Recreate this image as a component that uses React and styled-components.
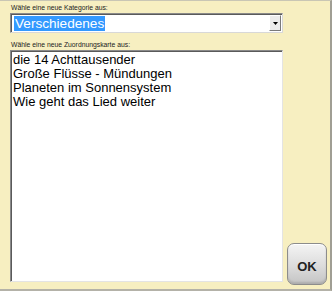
import styled, { createGlobalStyle } from 'styled-components'

const GlobalStyle = createGlobalStyle`
  html, body {
    margin: 0;
    padding: 0;
    background: #f7efc1;
  }
  * {
    box-sizing: border-box;
  }
`

const items = [
  'die 14 Achttausender',
  'Große Flüsse - Mündungen',
  'Planeten im Sonnensystem',
  'Wie geht das Lied weiter'
]

const App = () => {
  return (
    <>
      <GlobalStyle />
      <Dialog>
        <Column>
          <Label>Wähle eine neue Kategorie aus:</Label>
          <Select>
            <Selected>Verschiedenes</Selected>
            <DropButton>
              <svg width='5' height='3' viewBox='0 0 5 3'>
                <path d='M0 0h5L2.5 3z' fill='#000' />
              </svg>
            </DropButton>
          </Select>
          <Label $gap>Wähle eine neue Zuordnungskarte aus:</Label>
          <ListBox>
            {items.map((item) => (
              <Item key={item}>{item}</Item>
            ))}
          </ListBox>
        </Column>
        <Side>
          <OkButton>OK</OkButton>
        </Side>
      </Dialog>
    </>
  )
}

const Dialog = styled.div`
  width: 332px;
  height: 291px;
  display: grid;
  grid-template-columns: 283px 1fr;
  background: #f7efc1;
  border-top: 1px solid #c9c6b4;
  border-right: 2px solid #a09e94;
  border-bottom: 2px solid #b4b2a8;
  font-family: 'Liberation Sans', Arial, sans-serif;
`

const Column = styled.div`
  display: flex;
  flex-direction: column;
  padding: 2px 0 0 10px;
`

const Label = styled.div`
  font-size: 6.8px;
  line-height: 9px;
  height: 10px;
  color: #222;
  padding-left: 1px;
  margin-top: ${(p) => (p.$gap ? '7px' : '0')};
`

const Select = styled.div`
  height: 20px;
  display: flex;
  align-items: center;
  justify-content: space-between;
  background: #fff;
  border-top: 1px solid #8a8a8a;
  border-left: 1px solid #8a8a8a;
  border-right: 1px solid #d8d8d8;
  border-bottom: 1px solid #d8d8d8;
  box-shadow: inset 1px 1px 0 #5a5a5a;
  padding: 1px 1px 1px 3px;
`

const Selected = styled.span`
  background: #3399ff;
  color: #fff;
  font-size: 13.6px;
  line-height: 15px;
  padding: 0 1px;
`

const DropButton = styled.div`
  width: 12px;
  height: 16px;
  display: flex;
  align-items: center;
  justify-content: center;
  background: #ececec;
  border-top: 1px solid #fff;
  border-left: 1px solid #fff;
  border-right: 1px solid #7a7a7a;
  border-bottom: 1px solid #7a7a7a;
`

const ListBox = styled.div`
  height: 232px;
  background: #fff;
  border-top: 1px solid #8a8a8a;
  border-left: 1px solid #8a8a8a;
  border-right: 1px solid #e4e4e4;
  border-bottom: 1px solid #e4e4e4;
  box-shadow: inset 1px 1px 0 #5a5a5a;
  padding: 2px 2px 0 2px;
`

const Item = styled.div`
  font-size: 13px;
  line-height: 14px;
  color: #000;
`

const Side = styled.div`
  display: flex;
  align-items: flex-end;
  padding: 0 0 4px 4px;
`

const OkButton = styled.button`
  width: 40px;
  height: 42px;
  border-radius: 7px;
  border: 1px solid #8c8c8c;
  background: linear-gradient(#f4f4f4, #dcdcdc 55%, #c4c4c4);
  box-shadow: inset 0 1px 0 #fff, inset 0 -2px 2px rgba(0, 0, 0, 0.12);
  font-family: 'Liberation Sans', Arial, sans-serif;
  font-weight: bold;
  font-size: 13px;
  color: #222;
  padding: 0;
  padding-top: 4px;
  cursor: pointer;
`

export default App
